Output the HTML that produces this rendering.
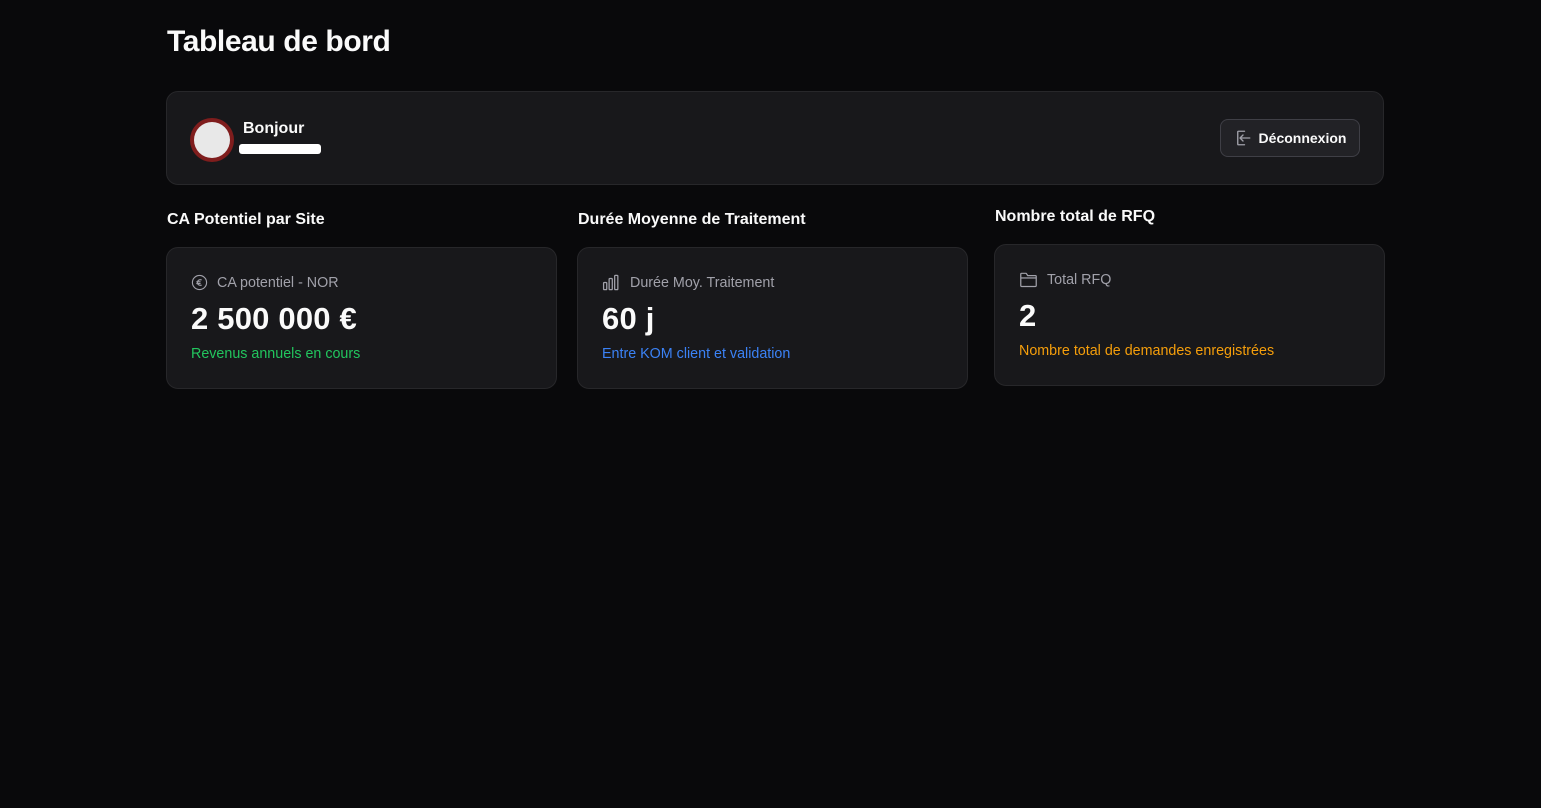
<!DOCTYPE html>
<html><head><meta charset="utf-8"><style>
*{box-sizing:border-box;margin:0;padding:0}
body{width:1541px;height:808px;background:#09090b;font-family:"Liberation Sans",sans-serif;color:#fafafa;position:relative;overflow:hidden}
.abs{position:absolute}
h1{position:absolute;left:167px;top:25px;font-size:30px;font-weight:700;letter-spacing:-0.4px}
.card{position:absolute;background:#18181b;border:1px solid #27272a;border-radius:12px}
.st{position:absolute;font-size:16px;font-weight:700}
.lbl{position:absolute;left:24px;font-size:14.3px;color:#a1a1aa;display:flex;align-items:center;gap:9px}
.val{position:absolute;left:24px;font-size:31px;font-weight:700;letter-spacing:0.2px}
.sub{position:absolute;left:24px;font-size:14.3px}
</style></head><body>
<h1>Tableau de bord</h1>
<div class="card" style="left:166px;top:91px;width:1218px;height:94px">
 <div class="abs" style="left:23px;top:26px;width:44px;height:44px;border-radius:50%;background:#7f1d1d;overflow:hidden"><div style="margin:4px;width:36px;height:36px;border-radius:50%;background:#e8e8e8"></div></div>
 <div class="abs" style="left:76px;top:28px;font-size:16px;font-weight:700">Bonjour</div>
 <div class="abs" style="left:72px;top:52px;width:82px;height:10px;background:#fff;border-radius:3px"></div>
 <div class="abs" style="left:1053px;top:27px;width:140px;height:38px;border:1px solid #3f3f46;border-radius:8px;background:#222226;display:flex;align-items:center;justify-content:center;gap:7px;font-size:14px;font-weight:700">
  <svg width="18" height="18" viewBox="0 0 24 24" fill="none" stroke="#a1a1aa" stroke-width="1.8" stroke-linecap="round" stroke-linejoin="round"><path d="M14 3H6a1 1 0 0 0-1 1v16a1 1 0 0 0 1 1h8"/><path d="M21 12H9"/><path d="M12 8l-4 4 4 4"/></svg>Déconnexion</div>
</div>
<div class="st" style="left:167px;top:211px">CA Potentiel par Site</div>
<div class="st" style="left:578px;top:211px">Durée Moyenne de Traitement</div>
<div class="st" style="left:995px;top:208px">Nombre total de RFQ</div>
<div class="card" style="left:166px;top:247px;width:391px;height:142px">
 <div class="lbl" style="top:26px"><svg width="17" height="17" viewBox="0 0 24 24" fill="none" stroke="#a1a1aa" stroke-width="1.6"><circle cx="12" cy="12" r="10"/><path d="M15 8.5a4 4 0 1 0 0 7M7.5 11h6M7.5 13.5h6"/></svg>CA potentiel - NOR</div>
 <div class="val" style="top:53px">2 500 000 €</div>
 <div class="sub" style="top:98px;color:#22c55e">Revenus annuels en cours</div>
</div>
<div class="card" style="left:577px;top:247px;width:391px;height:142px">
 <div class="lbl" style="top:26px"><svg width="19" height="17" viewBox="0 0 24 20" fill="none" stroke="#a1a1aa" stroke-width="1.6"><rect x="2" y="10" width="4" height="9" rx="1"/><rect x="9" y="5" width="4" height="14" rx="1"/><rect x="16" y="1" width="4" height="18" rx="1"/></svg>Durée Moy. Traitement</div>
 <div class="val" style="top:53px">60 j</div>
 <div class="sub" style="top:98px;color:#3b82f6">Entre KOM client et validation</div>
</div>
<div class="card" style="left:994px;top:244px;width:391px;height:142px">
 <div class="lbl" style="top:26px"><svg width="19" height="17" viewBox="0 0 24 22" fill="none" stroke="#a1a1aa" stroke-width="1.6" stroke-linejoin="round"><path d="M2 4a1 1 0 0 1 1-1h6l2 3h10a1 1 0 0 1 1 1v12a1 1 0 0 1-1 1H3a1 1 0 0 1-1-1z"/><path d="M2 9h20"/></svg>Total RFQ</div>
 <div class="val" style="top:53px">2</div>
 <div class="sub" style="top:98px;color:#f59e0b">Nombre total de demandes enregistrées</div>
</div>
</body></html>
